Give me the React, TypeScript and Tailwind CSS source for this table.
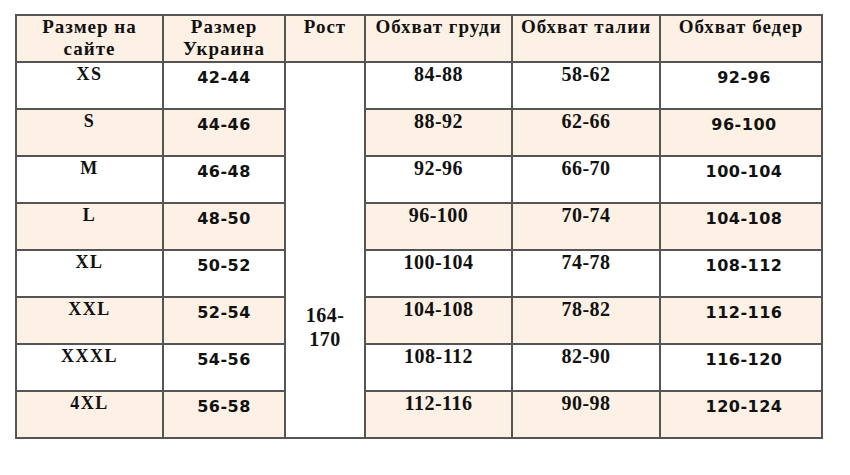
const serif = "font-['Liberation_Serif','Times_New_Roman',serif] font-bold";
const sans = "font-['DejaVu_Sans','Verdana',sans-serif] font-bold";

const rows = [
  { site: 'XS', ua: '42-44', chest: '84-88', waist: '58-62', hips: '92-96' },
  { site: 'S', ua: '44-46', chest: '88-92', waist: '62-66', hips: '96-100' },
  { site: 'M', ua: '46-48', chest: '92-96', waist: '66-70', hips: '100-104' },
  { site: 'L', ua: '48-50', chest: '96-100', waist: '70-74', hips: '104-108' },
  { site: 'XL', ua: '50-52', chest: '100-104', waist: '74-78', hips: '108-112' },
  { site: 'XXL', ua: '52-54', chest: '104-108', waist: '78-82', hips: '112-116' },
  { site: 'XXXL', ua: '54-56', chest: '108-112', waist: '82-90', hips: '116-120' },
  { site: '4XL', ua: '56-58', chest: '112-116', waist: '90-98', hips: '120-124' },
];

const cell = 'border-2 border-[#555] align-top text-center';
const head = `${cell} ${serif} text-[19px] leading-[22px] tracking-[1px] pt-0`;
const num = `${serif} text-[20px] leading-[23px] tracking-[0.5px]`;
const sansNum = `${sans} text-[16px] leading-[19px] tracking-[0.5px] pt-[5px]`;

export default function App() {
  return (
    <div className="w-[850px] h-[475px] bg-white pt-[14px] pl-[15px] text-[#111]">
      <table className="border-collapse table-fixed w-[806px]">
        <colgroup>
          <col className="w-[147px]" />
          <col className="w-[122px]" />
          <col className="w-[80px]" />
          <col className="w-[147px]" />
          <col className="w-[148px]" />
          <col className="w-[162px]" />
        </colgroup>
        <thead>
          <tr className="h-[47px] bg-[#fdf0e4]">
            <th className={head}>Размер на<br />сайте</th>
            <th className={head}>Размер<br />Украина</th>
            <th className={head}>Рост</th>
            <th className={head}>Обхват груди</th>
            <th className={head}>Обхват талии</th>
            <th className={head}>Обхват бедер</th>
          </tr>
        </thead>
        <tbody>
          {rows.map((r, i) => (
            <tr key={r.site} className={`h-[47px] ${i % 2 ? 'bg-[#fdf0e4]' : 'bg-white'}`}>
              <td className={`${cell} ${serif} text-[18px] leading-[21px] tracking-[1.5px] pt-[1px]`}>{r.site}</td>
              <td className={`${cell} ${sansNum}`}>{r.ua}</td>
              {i === 0 && (
                <td rowSpan={8} className={`${cell} bg-white ${num} leading-[24px] pt-[240px]`}>
                  164-<br />170
                </td>
              )}
              <td className={`${cell} ${num}`}>{r.chest}</td>
              <td className={`${cell} ${num}`}>{r.waist}</td>
              <td className={`${cell} pl-[6px] ${sansNum}`}>{r.hips}</td>
            </tr>
          ))}
        </tbody>
      </table>
    </div>
  );
}
